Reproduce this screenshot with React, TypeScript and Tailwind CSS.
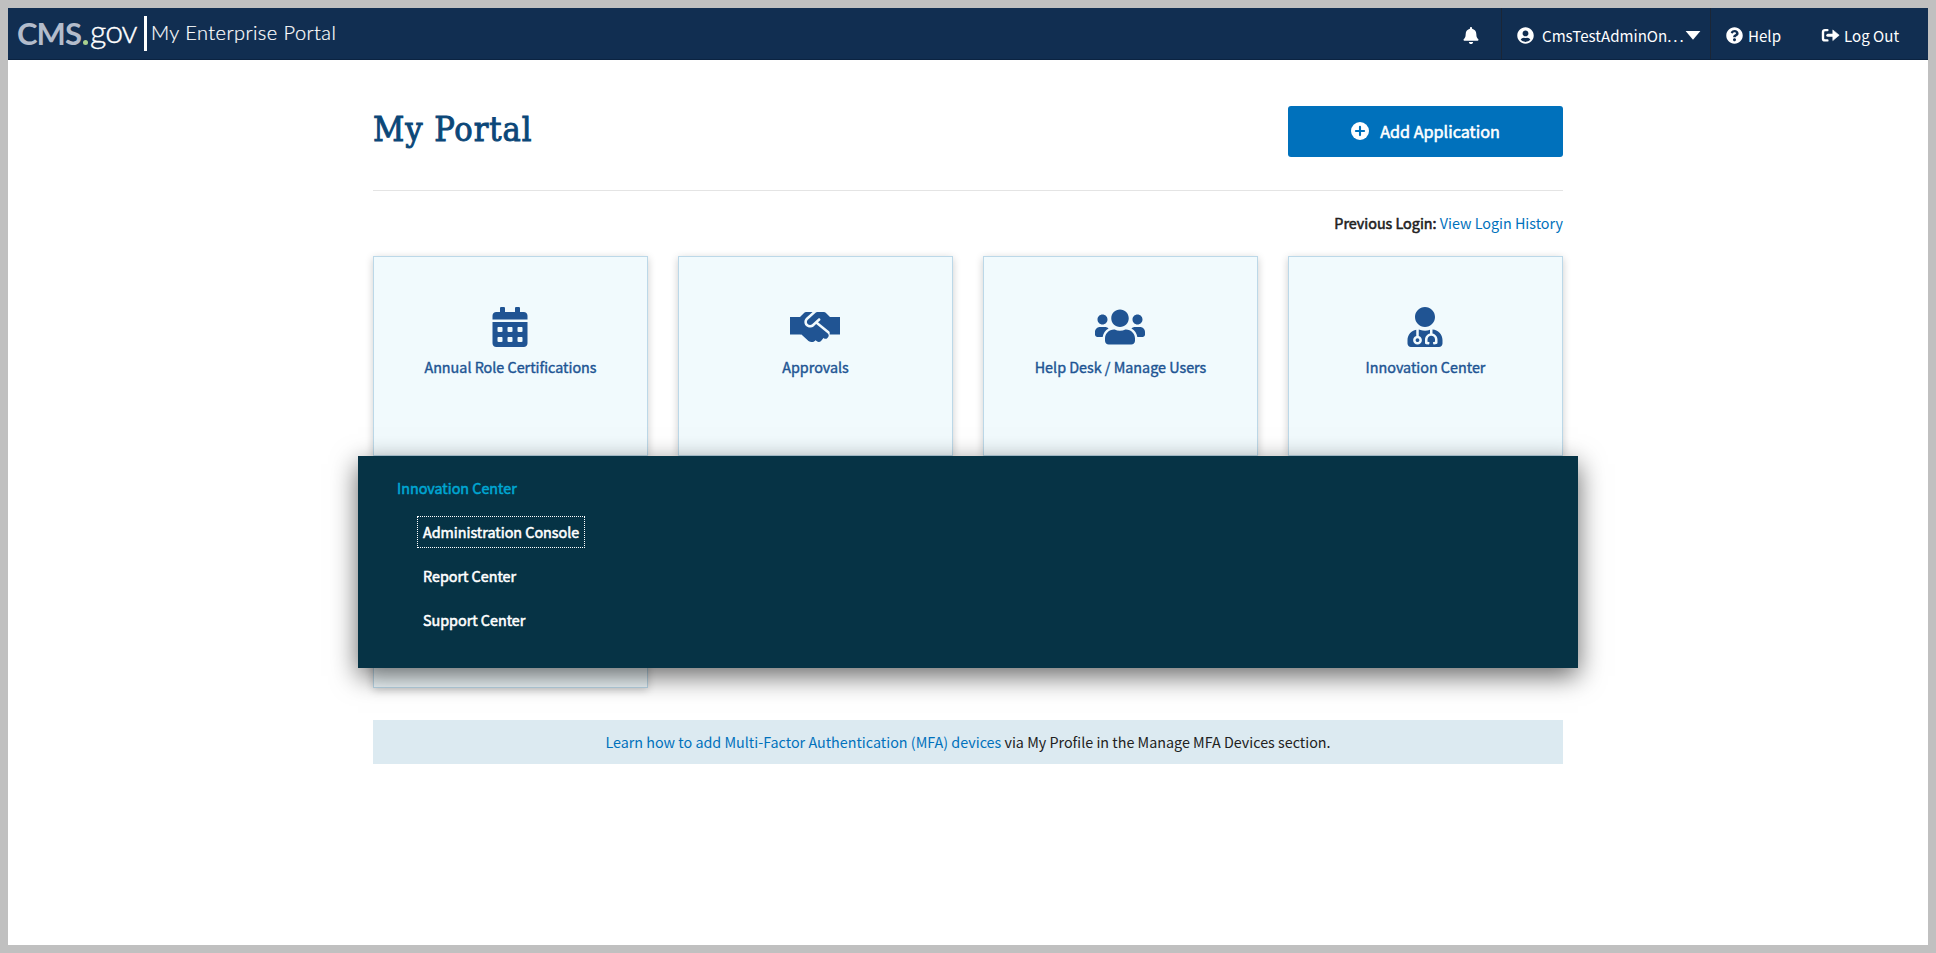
import type { ReactNode } from "react";
import { FaBell, FaCalendarAlt, FaHandshake, FaQuestionCircle, FaUserCircle, FaUserMd, FaUsers } from "react-icons/fa";

function LogOutIcon() {
  return (
    <svg width="19" height="17" viewBox="0 0 19 17" fill="none" aria-hidden="true">
      <path d="M6.4 3.1H4Q2 3.1 2 5.1v6.3q0 2 2 2h2.4" stroke="currentColor" strokeWidth="2.4" strokeLinecap="round" />
      <path d="M6.8 8.2H13" stroke="currentColor" strokeWidth="3" strokeLinecap="round" />
      <path d="M11.8 2.9v10.7l6.4-5.4z" fill="currentColor" stroke="currentColor" strokeWidth="0.6" strokeLinejoin="round" />
    </svg>
  );
}

function AddIcon() {
  return (
    <svg width="18" height="18" viewBox="0 0 18 18" fill="none" aria-hidden="true">
      <circle cx="9" cy="9" r="9" fill="currentColor" />
      <path d="M9 4.9v8.2M4.9 9h8.2" stroke="#0071bc" strokeWidth="2.1" strokeLinecap="round" />
    </svg>
  );
}

function HandshakeIcon() {
  return (
    <svg width="50" height="40" viewBox="0 0 640 512" fill="currentColor" aria-hidden="true">
      <rect x="0" y="128" width="132" height="224" />
      <rect x="508" y="128" width="132" height="224" />
      <svg x="128" width="384" height="512" viewBox="128 0 384 512">
        <FaHandshake size={640} y={-64} />
      </svg>
    </svg>
  );
}

const tiles: { label: string; icon: ReactNode }[] = [
  { label: "Annual Role Certifications", icon: <FaCalendarAlt size={40} /> },
  { label: "Approvals", icon: <HandshakeIcon /> },
  { label: "Help Desk / Manage Users", icon: <FaUsers className="h-10 w-[50px]" /> },
  { label: "Innovation Center", icon: <FaUserMd size={40} /> },
];

const tileBox = "h-[200px] border border-[#bcd8e8] bg-[#f1fafd] shadow-[0_2px_8px_rgba(0,0,0,0.2)]";
const strong = "[-webkit-text-stroke:0.55px_currentColor]";

function Header() {
  return (
    <header className="flex h-[52px] border-b border-[#0b2341] bg-[#112e51] text-[15.1px] text-white">
      <div className="flex items-start pl-[9px] font-['Lato',sans-serif] leading-[52px]">
        <span className="-mt-px w-[66px] whitespace-nowrap text-[31px] font-bold tracking-[-0.9px] text-[#b3bccb]">CMS</span>
        <span className="mt-[32px] size-[5px] rounded-full bg-[#a9d18e]" />
        <span className="-mt-[3px] ml-[2px] w-[53px] whitespace-nowrap text-[32px] font-light tracking-[-1px] [-webkit-text-stroke:0.4px_currentColor]">gov</span>
        <span className="mt-[8px] ml-px h-[35px] w-[3px] bg-white" />
        <span className="-mt-[2px] ml-[4px] whitespace-nowrap text-[20px] font-light tracking-[0.45px] [-webkit-text-stroke:0.2px_currentColor]">
          My Enterprise Portal
        </span>
      </div>
      <nav className="ml-auto flex">
        <div className="flex items-center pt-[3px] pr-[22px]">
          <FaBell className="h-[17px] w-[16px]" />
        </div>
        <div className="flex w-[210px] items-center border-x border-[#1b2636] pt-[3px] pl-[15px]">
          <FaUserCircle size={17} />
          <span className="ml-2 w-[143px] whitespace-nowrap">
            CmsTestAdminOn<span className="tracking-[1.9px]">...</span>
          </span>
          <svg width="16" height="9" viewBox="0 0 16 9" fill="currentColor" aria-hidden="true">
            <path d="M0.6 0h14.8L8 8.8z" />
          </svg>
        </div>
        <div className="flex w-[110px] items-center gap-[5px] pt-[3px] pl-[15px]">
          <FaQuestionCircle size={17} />
          <span>Help</span>
        </div>
        <div className="flex w-[107px] items-center gap-1 pt-[3px]">
          <LogOutIcon />
          <span className="whitespace-nowrap">Log Out</span>
        </div>
      </nav>
    </header>
  );
}

function TileMenu() {
  return (
    <div className="absolute top-[200px] -right-[15px] -left-[15px] h-[212px] bg-[#063345] pt-5 pl-[39px] text-white shadow-[0_8px_25px_rgba(0,0,0,0.6)]">
      <div className={`leading-6 text-[#00a6d2] ${strong}`}>Innovation Center</div>
      <ul className="mt-4 ml-5 flex flex-col items-start gap-3">
        {["Administration Console", "Report Center", "Support Center"].map((name, i) => (
          <li
            key={name}
            className={`h-8 border border-dotted px-[5px] leading-[30px] ${strong} ${i === 0 ? "border-white" : "border-transparent"}`}
          >
            {name}
          </li>
        ))}
      </ul>
    </div>
  );
}

export default function App() {
  return (
    <div className="flex h-[953px] w-full flex-col border-8 border-[#c0c0c0] bg-white font-['Noto_Sans_CJK_SC',sans-serif] text-[14.33px] text-[#212121]">
      <Header />
      <main className="mx-auto w-[1190px] pt-[46px]">
        <div className="flex items-start justify-between border-b border-[#e4e4e4] pb-[33px]">
          <h1 className="mt-[3px] text-[34px] leading-10 tracking-[0.95px] text-[#0b4778] font-['DejaVu_Serif_Condensed','DejaVu_Serif',serif] [-webkit-text-stroke:0.9px_currentColor]">
            My Portal
          </h1>
          <button className="flex h-[51px] w-[275px] items-center justify-center gap-[11px] rounded-[3px] bg-[#0071bc] pb-px text-white">
            <AddIcon />
            <span className={`text-[16.2px] leading-6 ${strong}`}>Add Application</span>
          </button>
        </div>
        <p className="mt-5 text-right leading-6">
          <span className={strong}>Previous Login:</span> <a className="text-[#0071bc]">View Login History</a>
        </p>
        <section className="relative mt-[21px] grid grid-cols-4 gap-x-[30px] gap-y-8">
          {tiles.map((tile) => (
            <div key={tile.label} className={`flex flex-col items-center pt-[50px] text-[#205493] ${tileBox}`}>
              <span className="mr-px">{tile.icon}</span>
              <span className="mt-[10px] leading-5 [-webkit-text-stroke:0.4px_currentColor]">{tile.label}</span>
            </div>
          ))}
          <div className={tileBox} />
          <TileMenu />
        </section>
        <p className="mt-8 h-11 bg-[#dceaf1] text-center leading-[44px]">
          <a className="text-[#0071bc]">Learn how to add Multi-Factor Authentication (MFA) devices</a> via My Profile in the Manage MFA Devices section.
        </p>
      </main>
    </div>
  );
}
